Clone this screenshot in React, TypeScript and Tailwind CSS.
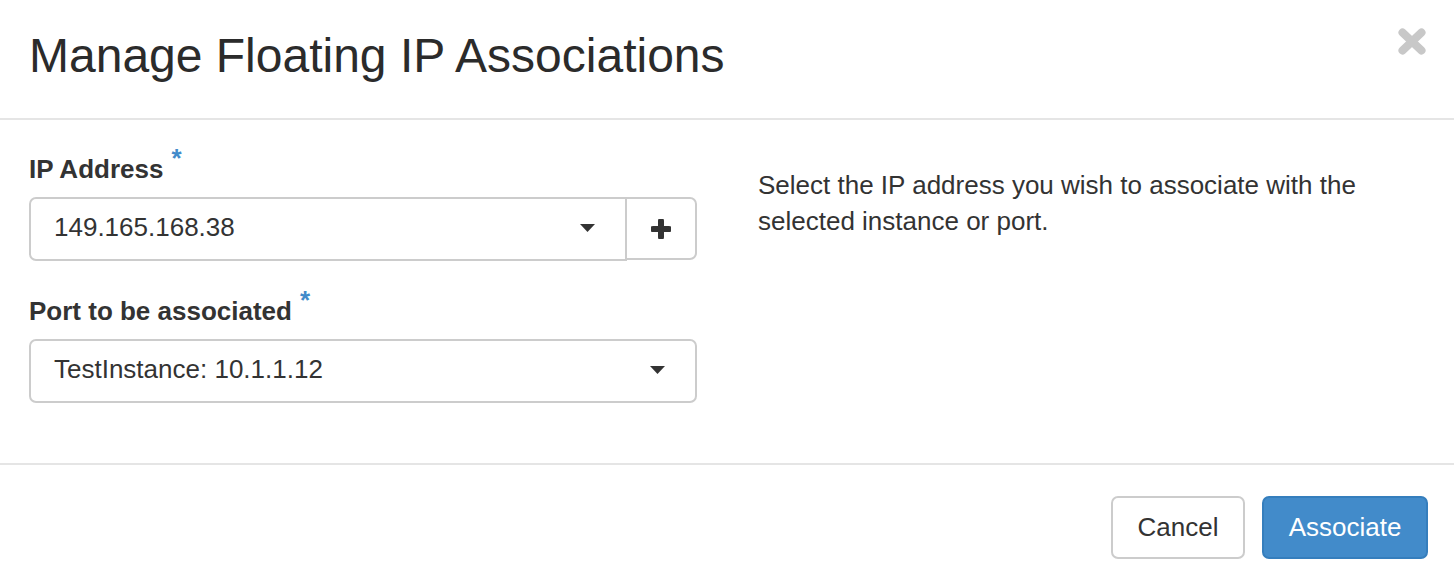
import { useState } from "react";

function Caret() {
  return (
    <svg width="15" height="8" viewBox="0 0 15 8" className="shrink-0">
      <path d="M0 0h15L7.5 8z" fill="#333" />
    </svg>
  );
}

function Required({ label }: { label: string }) {
  return (
    <label className="flex items-start text-[26px] leading-[37px] font-bold text-[#333]">
      {label}
      <span className="ml-[8px] -mt-[5px] text-[26px] leading-[24px] text-[#428bca]">*</span>
    </label>
  );
}

export default function App() {
  const [ip] = useState("149.165.168.38");
  const [port] = useState("TestInstance: 10.1.1.12");

  return (
    <div className="w-[1454px] h-[582px] bg-white text-[#333] overflow-hidden" style={{ fontFamily: '"Liberation Sans", Arial, sans-serif' }}>
      {/* header */}
      <div className="h-[120px] border-b-2 border-[#e5e5e5] flex items-center justify-between pl-[29px] pr-[28px]">
        <h3 className="text-[48px] leading-none text-[#2b2b2b] -mt-[6px]">Manage Floating IP Associations</h3>
        <button className="self-start mt-[28px]" aria-label="Close">
          <svg width="28" height="27" viewBox="0 0 28 27">
            <path d="M4.5 4.5l19 18M23.5 4.5l-19 18" stroke="#c8c8c8" strokeWidth="8" strokeLinecap="round" />
          </svg>
        </button>
      </div>

      {/* body */}
      <div className="flex gap-[61px] px-[29px] pt-[31px] pb-[30px]">
        <div className="w-[668px]">
          <div className="mb-[32px]">
            <Required label="IP Address" />
            <div className="flex mt-[9px]">
              <div className="flex-1 h-[64px] border-2 border-[#ccc] rounded-l-[7px] flex items-center justify-between pl-[23px] pr-[30px] pb-[3px] text-[26px]">
                <span>{ip}</span>
                <Caret />
              </div>
              <button className="w-[72px] h-[63px] -ml-[2px] border-2 border-[#ccc] rounded-r-[7px] flex items-center justify-center">
                <svg width="20" height="20" viewBox="0 0 20 20">
                  <path d="M10 2v16M2 10h16" stroke="#333" strokeWidth="6" strokeLinecap="round" />
                </svg>
              </button>
            </div>
          </div>
          <div>
            <Required label="Port to be associated" />
            <div className="mt-[9px] h-[64px] border-2 border-[#ccc] rounded-[7px] flex items-center justify-between pl-[23px] pr-[30px] pb-[3px] text-[26px]">
              <span>{port}</span>
              <Caret />
            </div>
          </div>
        </div>
        <p className="w-[640px] mt-[16px] text-[26px] leading-[36px]">
          Select the IP address you wish to associate with the selected instance or port.
        </p>
      </div>

      {/* footer */}
      <div className="border-t-2 border-[#e5e5e5] mt-[30px] pt-[31px] pr-[26px] flex justify-end gap-[17px]">
        <button className="w-[134px] h-[63px] border-2 border-[#ccc] rounded-[7px] bg-white text-[26px] text-[#333]">Cancel</button>
        <button className="w-[166px] h-[63px] border-2 border-[#357ebd] rounded-[7px] bg-[#428bca] text-[26px] text-white">Associate</button>
      </div>
    </div>
  );
}
